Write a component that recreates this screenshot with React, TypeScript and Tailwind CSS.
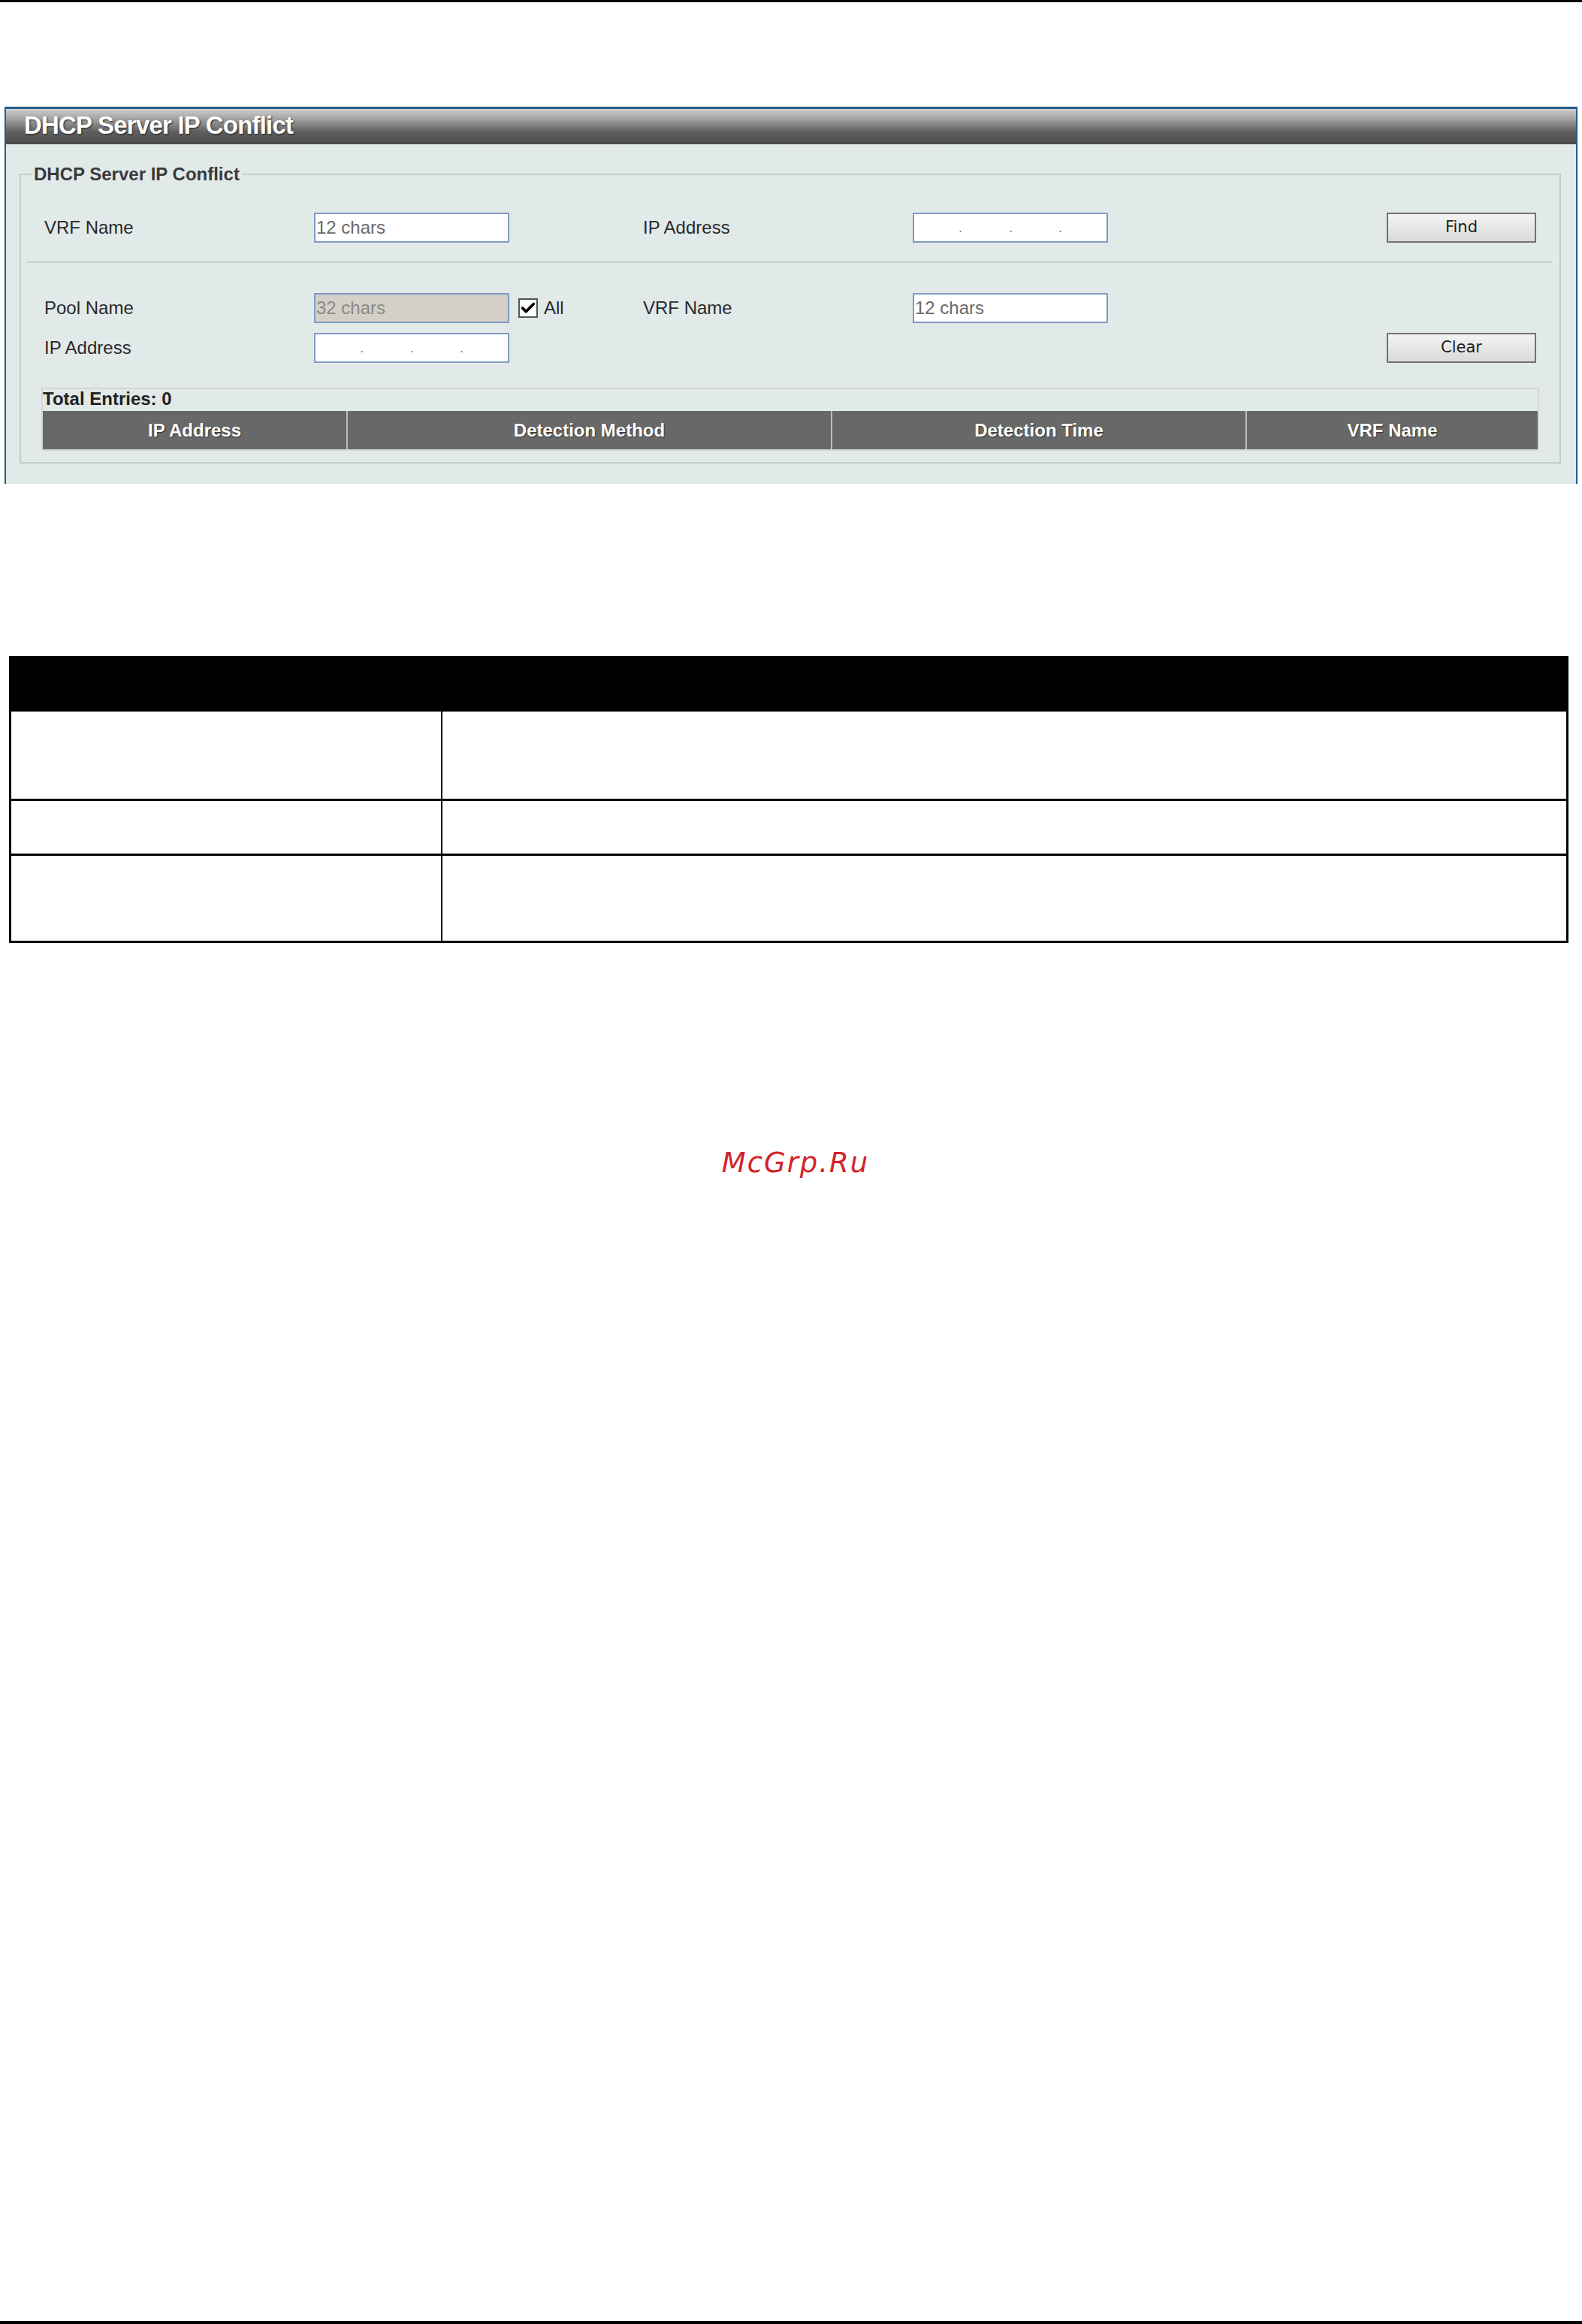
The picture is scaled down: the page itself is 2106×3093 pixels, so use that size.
import { Check } from 'lucide-react';

function TextBox({ value, disabled }: { value: string; disabled?: boolean }) {
  return (
    <div
      className={`flex h-[40px] items-center border-2 border-[#7f9dc0] pl-[1px] text-[24px] ${
        disabled ? 'w-[260px] bg-[#d4d0c8] text-[#8a8a8a]' : 'w-[260px] bg-white text-[#6a6a6a]'
      }`}
    >
      {value}
    </div>
  );
}

function IpBox() {
  return (
    <div className="flex h-[40px] w-[260px] items-center border-2 border-[#7f9dc0] bg-white pl-[59px] text-[18px] leading-none text-[#6b84a8]">
      <span className="w-[67px]">.</span>
      <span className="w-[66px]">.</span>
      <span>.</span>
    </div>
  );
}

function GrayButton({ label }: { label: string }) {
  return (
    <button className="ml-auto flex h-[40px] w-[199px] items-center justify-center border-2 border-[#707070] bg-[linear-gradient(to_bottom,#f4f4f4,#dadada)] font-['DejaVu_Sans',sans-serif] text-[21px] text-[#1e1e1e]">
      {label}
    </button>
  );
}

function Label({ text }: { text: string }) {
  return <div className="w-[359px] shrink-0 text-[24px] text-[#2a2a2a]">{text}</div>;
}

function App() {
  const columns = ['IP Address', 'Detection Method', 'Detection Time', 'VRF Name'];

  return (
    <div className="flex min-h-[3093px] w-full flex-col bg-white font-['Liberation_Sans',Arial,sans-serif]">
      <div className="h-[3px] w-full bg-black" />

      {/* Panel */}
      <div className="mx-[6px] mt-[139px] border-x-2 border-t-[3px] border-[#245d8c] bg-[#e1e9e9] pb-[27px]">
        <div className="flex h-[47px] items-center bg-[linear-gradient(to_bottom,#cfcfcf_0%,#a0a0a0_30%,#5e5e5e_65%,#4c4c4c_100%)] pb-[4px] pl-[24px] text-[33px] font-bold tracking-[-0.8px] text-white [text-shadow:1px_1px_2px_#222]">
          DHCP Server IP Conflict
        </div>

        <fieldset className="ml-[18px] mr-[20px] mt-[26px] border-2 border-[#c4cdcd] pb-[15px]">
          <legend className="ml-[14px] px-[3px] text-[24px] font-bold leading-[28px] text-[#3a3a3a]">
            DHCP Server IP Conflict
          </legend>

          <div className="mt-[37px] flex items-center pl-[31px] pr-[31px]">
            <Label text="VRF Name" />
            <TextBox value="12 chars" />
            <div className="w-[178px] shrink-0" />
            <Label text="IP Address" />
            <IpBox />
            <GrayButton label="Find" />
          </div>

          <div className="ml-[8px] mr-[10px] mt-[25px] h-[2px] bg-[#c6cfcf]" />

          <div className="mt-[40px] flex items-center pl-[31px] pr-[31px]">
            <Label text="Pool Name" />
            <TextBox value="32 chars" disabled />
            <div className="flex w-[178px] shrink-0 items-center pl-[12px]">
              <span className="flex h-[26px] w-[26px] items-center justify-center border-2 border-[#555] bg-white">
                <Check className="h-[22px] w-[22px] text-black" strokeWidth={4} />
              </span>
              <span className="ml-[8px] text-[24px] text-[#2a2a2a]">All</span>
            </div>
            <Label text="VRF Name" />
            <TextBox value="12 chars" />
          </div>

          <div className="mt-[13px] flex items-center pl-[31px] pr-[31px]">
            <Label text="IP Address" />
            <IpBox />
            <GrayButton label="Clear" />
          </div>

          <div className="ml-[27px] mr-[27px] mt-[33px] border-2 border-[#d1d7d7]">
            <div className="flex h-[29px] items-start text-[24px] font-bold leading-[26px] text-[#222]">
              Total Entries: 0
            </div>
            <div className="grid h-[51px] grid-cols-[404px_645px_552px_1fr] bg-[#686868] text-[24px] font-bold text-white [text-shadow:1px_1px_1px_#333]">
              {columns.map((c, i) => (
                <div
                  key={c}
                  className={`flex items-center justify-center ${i > 0 ? 'border-l-2 border-[#bdbdbd]' : ''}`}
                >
                  {c}
                </div>
              ))}
            </div>
          </div>
        </fieldset>
      </div>

      {/* Parameter table */}
      <div className="ml-[12px] mt-[229px] w-[2076px] border-x-[3px] border-b-[3px] border-black">
        <div className="h-[74px] bg-black" />
        <div className="grid h-[116px] grid-cols-[574px_1fr]">
          <div className="border-r-2 border-black" />
          <div />
        </div>
        <div className="grid h-[73px] grid-cols-[574px_1fr] border-t-[3px] border-black">
          <div className="border-r-2 border-black" />
          <div />
        </div>
        <div className="grid h-[116px] grid-cols-[574px_1fr] border-t-[3px] border-black">
          <div className="border-r-2 border-black" />
          <div />
        </div>
      </div>

      <div className="mt-[271px] pl-[12px] text-center font-['DejaVu_Sans',sans-serif] text-[37px] italic leading-[44px] tracking-[2px] text-[#d42128]">
        McGrp.Ru
      </div>

      <div className="mt-auto h-[4px] w-full bg-black" />
    </div>
  );
}

export default App;
